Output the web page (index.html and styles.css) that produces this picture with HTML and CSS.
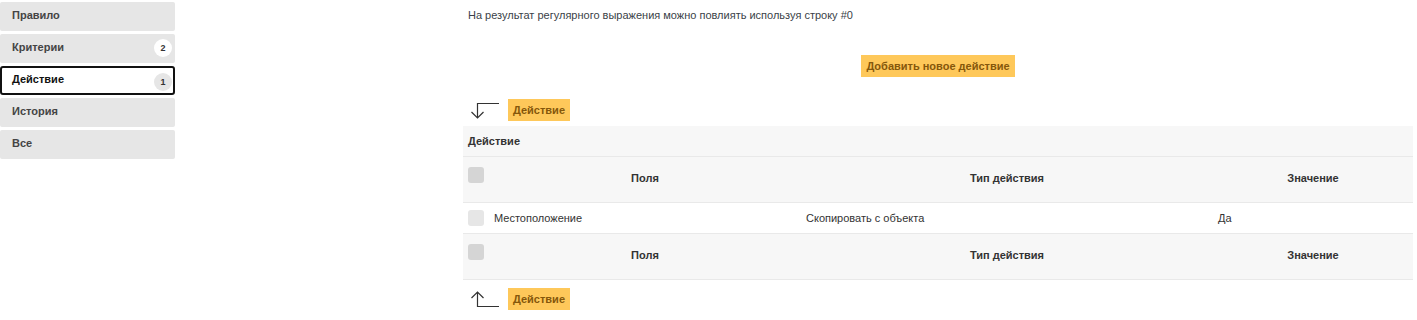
FILE: index.html
```html
<!DOCTYPE html>
<html lang="ru">
<head>
    <meta charset="UTF-8">
    <title>Правило</title>
    <link rel="stylesheet" href="styles.css">
</head>
<body>
    <div class="page">
        <ul class="tabs">
            <li class="tab">Правило</li>
            <li class="tab">Критерии <span class="badge">2</span></li>
            <li class="tab active">Действие <span class="badge">1</span></li>
            <li class="tab">История</li>
            <li class="tab">Все</li>
        </ul>

        <div class="main">
            <p class="hint">На результат регулярного выражения можно повлиять используя строку #0</p>

            <div class="add-row">
                <button class="btn-yellow">Добавить новое действие</button>
            </div>

            <div class="jump top">
                <svg width="30" height="17" viewBox="0 0 30 17">
                    <path d="M29 1.5H7.5V16M1.5 10l6 6 6-6" fill="none" stroke="#333" stroke-width="1.2"/>
                </svg>
                <span class="tag">Действие</span>
            </div>

            <table class="actions">
                <colgroup>
                    <col class="c-check">
                    <col class="c-field">
                    <col class="c-type">
                    <col class="c-value">
                </colgroup>
                <tr class="caption">
                    <td colspan="4">Действие</td>
                </tr>
                <tr class="head">
                    <td><span class="check"></span></td>
                    <th>Поля</th>
                    <th>Тип действия</th>
                    <th>Значение</th>
                </tr>
                <tr class="data">
                    <td><span class="check light"></span></td>
                    <td>Местоположение</td>
                    <td>Скопировать с объекта</td>
                    <td>Да</td>
                </tr>
                <tr class="head">
                    <td><span class="check"></span></td>
                    <th>Поля</th>
                    <th>Тип действия</th>
                    <th>Значение</th>
                </tr>
            </table>

            <div class="jump bottom">
                <svg width="30" height="18" viewBox="0 0 30 18">
                    <path d="M29 16.5H7.5V2M1.5 8l6-6 6 6" fill="none" stroke="#333" stroke-width="1.2"/>
                </svg>
                <span class="tag">Действие</span>
            </div>
        </div>
    </div>
</body>
</html>
```

FILE: styles.css
```css
body {
    margin: 0;
    font-family: "Liberation Sans", Arial, sans-serif;
    font-size: 11px;
    color: #333;
    background-color: white;
}
.page {
    display: flex;
    gap: 288px;
    padding-right: 4px;
}
.tabs {
    list-style: none;
    margin: 0;
    padding: 2px 0 0 0;
    width: 175px;
    flex-shrink: 0;
    display: flex;
    flex-direction: column;
    gap: 3px;
}
.tab {
    display: flex;
    justify-content: space-between;
    align-items: flex-start;
    height: 29px;
    box-sizing: border-box;
    padding: 7px 3px 0 12px;
    background-color: #e6e6e6;
    border-radius: 2px;
    font-weight: bold;
    color: #444;
    line-height: 13px;
}
.tab.active {
    background-color: white;
    border: 2px solid #111;
    border-radius: 3px;
    padding: 5px 1px 0 10px;
    color: #111;
}
.badge {
    width: 18px;
    height: 18px;
    margin-top: -2px;
    border-radius: 50%;
    background-color: white;
    font-size: 9px;
    line-height: 18px;
    text-align: center;
    color: #333;
}
.tab.active .badge {
    background-color: #e6e6e6;
    margin-top: 0;
}
.main {
    flex: 1;
    padding-top: 9px;
}
.hint {
    margin: 0 0 0 5px;
    line-height: 13px;
    color: #3a3f48;
}
.add-row {
    display: flex;
    justify-content: center;
    margin-top: 33px;
}
.btn-yellow, .tag {
    background-color: #fec85a;
    color: #85570b;
    font-family: inherit;
    font-size: 11px;
    font-weight: bold;
    border: none;
    padding: 0 5px;
    height: 22px;
    line-height: 22px;
    cursor: pointer;
}
.jump {
    display: flex;
    align-items: center;
    gap: 8px;
    padding-left: 7px;
}
.jump.top {
    margin-top: 22px;
}
.jump.bottom {
    margin-top: 8px;
}
.tag {
    display: inline-block;
}
.actions {
    width: 100%;
    margin-top: 5px;
    border-collapse: collapse;
    table-layout: fixed;
}
.c-check { width: 26px; }
.c-field { width: 312px; }
.c-type { width: 412px; }
.c-value { width: 200px; }
.actions td, .actions th {
    padding: 0 5px;
    text-align: left;
    vertical-align: middle;
}
.actions tr {
    border-bottom: 1px solid #e9e9e9;
}
.caption {
    background-color: #f7f7f7;
    height: 30px;
    font-weight: bold;
}
.head {
    background-color: #f7f7f7;
    height: 46px;
}
.actions .head th {
    text-align: center;
    font-weight: bold;
    padding-bottom: 2px;
}
.head td {
    padding-bottom: 8px;
}
.data {
    height: 31px;
}
.check {
    display: block;
    width: 16px;
    height: 16px;
    border-radius: 3px;
    background-color: #d5d5d5;
}
.check.light {
    background-color: #e6e6e6;
}
```
